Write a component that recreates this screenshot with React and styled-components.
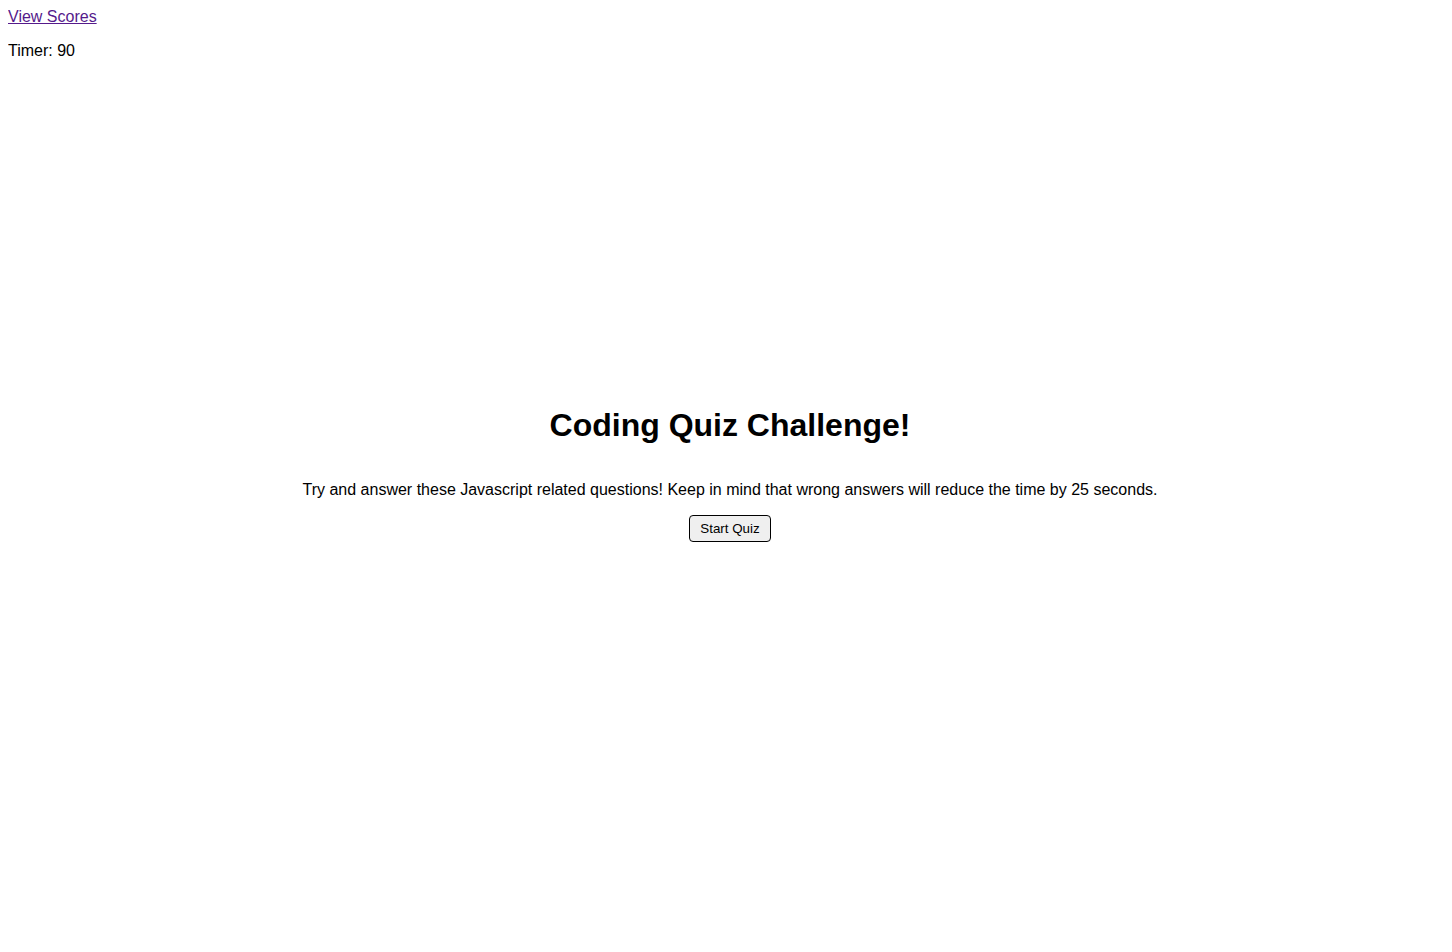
import React from 'react';
import styled, { createGlobalStyle } from 'styled-components';

const GlobalStyle = createGlobalStyle`
  body {
    margin: 8px;
    font-family: "Liberation Sans", Arial, sans-serif;
    font-size: 16px;
    color: #000;
    background: #fff;
  }
`;

const Header = styled.header`
  display: flex;
  flex-direction: column;
  align-items: flex-start;
`;

const ScoresLink = styled.a`
  color: #551a8b;
  text-decoration: underline;
  line-height: 18px;
  cursor: pointer;
`;

const Timer = styled.p`
  margin: 16px 0 0;
  line-height: 18px;
`;

const Main = styled.main`
  display: flex;
  flex-direction: column;
  align-items: center;
  text-align: center;
  padding: 347px 0 0 8px;
`;

const Title = styled.h1`
  margin: 0;
  font-size: 32px;
  font-weight: bold;
  line-height: 37px;
`;

const Intro = styled.p`
  margin: 37px 0 0;
  line-height: 18px;
`;

const StartButton = styled.button`
  margin-top: 16px;
  font-family: "Liberation Sans", Arial, sans-serif;
  font-size: 13.333px;
  line-height: 15px;
  padding: 5px 10px;
  color: #000;
  background-color: #efefef;
  border: 1px solid #000;
  border-radius: 4px;
  cursor: pointer;
  &:hover {
    background-color: #e5e5e5;
  }
`;

const App = () => {
  return (
    <>
      <GlobalStyle />
      <Header>
        <ScoresLink href="#scores">View Scores</ScoresLink>
        <Timer>Timer: 90</Timer>
      </Header>
      <Main>
        <Title>Coding Quiz Challenge!</Title>
        <Intro>
          Try and answer these Javascript related questions! Keep in mind that wrong answers will reduce the time by 25 seconds.
        </Intro>
        <StartButton>Start Quiz</StartButton>
      </Main>
    </>
  );
};

export default App;
